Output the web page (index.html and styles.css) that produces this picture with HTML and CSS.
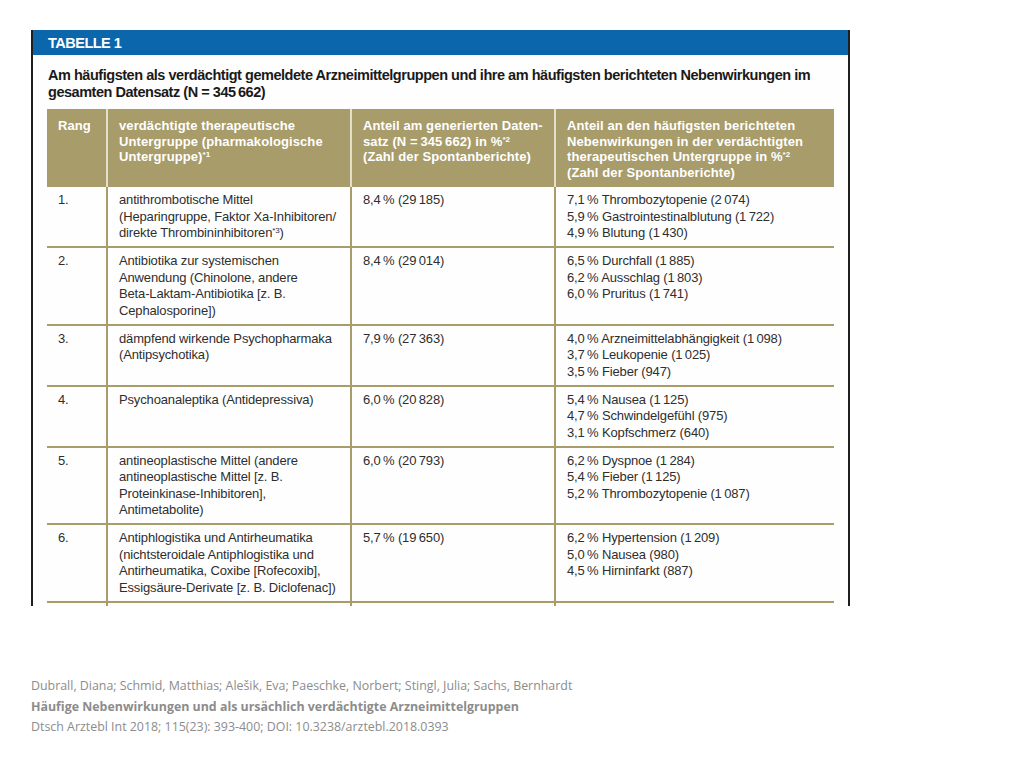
FILE: index.html
```html
<!DOCTYPE html>
<html lang="de">
<head>
<meta charset="utf-8">
<title>Tabelle 1</title>
<link rel="stylesheet" href="styles.css">
</head>
<body>
<div class="page">
  <section class="panel">
    <div class="panel-bar">TABELLE 1</div>
    <h1 class="panel-title">Am häufigsten als verdächtigt gemeldete Arzneimittelgruppen und ihre am häufigsten berichteten Nebenwirkungen im gesamten Datensatz (N = 345&#8201;662)</h1>
    <table class="data">
      <colgroup>
        <col class="c-rang">
        <col class="c-group">
        <col class="c-share">
        <col class="c-effects">
      </colgroup>
      <thead>
        <tr>
          <th>Rang</th>
          <th>verdächtigte therapeutische<br>Untergruppe (pharmakologische<br>Untergruppe)<sup>*1</sup></th>
          <th>Anteil am generierten Daten-<br>satz (N =&#8201;345&#8201;662) in %<sup>*2</sup><br>(Zahl der Spontanberichte)</th>
          <th>Anteil an den häufigsten berichteten<br>Nebenwirkungen in der verdächtigten<br>therapeutischen Untergruppe in %<sup>*2</sup><br>(Zahl der Spontanberichte)</th>
        </tr>
      </thead>
      <tbody>
        <tr>
          <td>1.</td>
          <td>antithrombotische Mittel<br>(Heparingruppe, Faktor Xa-Inhibitoren/<br>direkte Thrombininhibitoren<sup>*3</sup>)</td>
          <td>8,4&#8201;% (29&#8201;185)</td>
          <td>7,1&#8201;% Thrombozytopenie (2&#8201;074)<br>5,9&#8201;% Gastrointestinalblutung (1&#8201;722)<br>4,9&#8201;% Blutung (1&#8201;430)</td>
        </tr>
        <tr>
          <td>2.</td>
          <td>Antibiotika zur systemischen<br>Anwendung (Chinolone, andere<br>Beta-Laktam-Antibiotika [z. B.<br>Cephalosporine])</td>
          <td>8,4&#8201;% (29&#8201;014)</td>
          <td>6,5&#8201;% Durchfall (1&#8201;885)<br>6,2&#8201;% Ausschlag (1&#8201;803)<br>6,0&#8201;% Pruritus (1&#8201;741)</td>
        </tr>
        <tr>
          <td>3.</td>
          <td>dämpfend wirkende Psychopharmaka<br>(Antipsychotika)</td>
          <td>7,9&#8201;% (27&#8201;363)</td>
          <td>4,0&#8201;% Arzneimittelabhängigkeit (1&#8201;098)<br>3,7&#8201;% Leukopenie (1&#8201;025)<br>3,5&#8201;% Fieber (947)</td>
        </tr>
        <tr>
          <td>4.</td>
          <td>Psychoanaleptika (Antidepressiva)</td>
          <td>6,0&#8201;% (20&#8201;828)</td>
          <td>5,4&#8201;% Nausea (1&#8201;125)<br>4,7&#8201;% Schwindelgefühl (975)<br>3,1&#8201;% Kopfschmerz (640)</td>
        </tr>
        <tr>
          <td>5.</td>
          <td>antineoplastische Mittel (andere<br>antineoplastische Mittel [z. B.<br>Proteinkinase-Inhibitoren],<br>Antimetabolite)</td>
          <td>6,0&#8201;% (20&#8201;793)</td>
          <td>6,2&#8201;% Dyspnoe (1&#8201;284)<br>5,4&#8201;% Fieber (1&#8201;125)<br>5,2&#8201;% Thrombozytopenie (1&#8201;087)</td>
        </tr>
        <tr>
          <td>6.</td>
          <td>Antiphlogistika und Antirheumatika<br>(nichtsteroidale Antiphlogistika und<br>Antirheumatika, Coxibe [Rofecoxib],<br>Essigsäure-Derivate [z. B. Diclofenac])</td>
          <td>5,7&#8201;% (19&#8201;650)</td>
          <td>6,2&#8201;% Hypertension (1&#8201;209)<br>5,0&#8201;% Nausea (980)<br>4,5&#8201;% Hirninfarkt (887)</td>
        </tr>
        <tr class="cut">
          <td></td><td></td><td></td><td></td>
        </tr>
      </tbody>
    </table>
  </section>
  <footer class="citation">
    <p>Dubrall, Diana; Schmid, Matthias; Alešik, Eva; Paeschke, Norbert; Stingl, Julia; Sachs, Bernhardt</p>
    <p class="cite-title">Häufige Nebenwirkungen und als ursächlich verdächtigte Arzneimittelgruppen</p>
    <p>Dtsch Arztebl Int 2018; 115(23): 393-400; DOI: 10.3238/arztebl.2018.0393</p>
  </footer>
</div>
</body>
</html>
```

FILE: styles.css
```css
html, body {
  margin: 0;
  padding: 0;
  background: #ffffff;
}

.page {
  padding: 30px 0 0 31px;
}

.panel {
  width: 819px;
  height: 576px;
  box-sizing: border-box;
  border-left: 2px solid #1f1f1f;
  border-right: 2px solid #1f1f1f;
  overflow: hidden;
  background: #fefefe;
  font-family: "Liberation Sans", Arial, sans-serif;
}

.panel-bar {
  margin: 0 -2px;
  height: 25px;
  background: #0b66ab;
  color: #ffffff;
  font-weight: bold;
  font-size: 14.5px;
  line-height: 27px;
  padding-left: 17px;
  letter-spacing: -0.5px;
}

.panel-title {
  margin: 12px 0 0 0;
  padding: 0 10px 0 15px;
  font-size: 14.5px;
  line-height: 17px;
  font-weight: bold;
  color: #1a1a1a;
  letter-spacing: -0.47px;
}

.data {
  margin: 8px 0 0 14px;
  width: 787px;
  table-layout: fixed;
  border-collapse: collapse;
  font-size: 13px;
}

.c-rang { width: 60px; }
.c-group { width: 244px; }
.c-share { width: 204px; }
.c-effects { width: 279px; }

.data th {
  background: #a89c6a;
  color: #ffffff;
  font-weight: bold;
  font-size: 13px;
  text-align: left;
  vertical-align: top;
  line-height: 15.6px;
  padding: 9px 4px 7px 11px;
  height: 62px;
  border-left: 2px solid #e4dfcc;
  letter-spacing: 0.1px;
  white-space: nowrap;
}

.data th:first-child {
  border-left: none;
}

.data td {
  color: #2e2e2e;
  vertical-align: top;
  line-height: 16.5px;
  padding: 5px 4px 4.5px 11px;
  border-left: 2px solid #a89c6a;
  border-bottom: 2px solid #a89c6a;
  letter-spacing: -0.15px;
  white-space: nowrap;
}

.data td:first-child {
  border-left: none;
}

.data tr.cut td {
  height: 20px;
  padding: 0;
  border-bottom: none;
}

.data sup {
  font-size: 8px;
  line-height: 0;
  vertical-align: 4px;
}

.citation {
  margin-top: 70px;
  font-family: "Open Sans", Lato, sans-serif;
  font-size: 12.4px;
  line-height: 20.5px;
  color: #8c8c8c;
}

.citation p {
  margin: 0;
}

.cite-title {
  font-weight: bold;
}
```
